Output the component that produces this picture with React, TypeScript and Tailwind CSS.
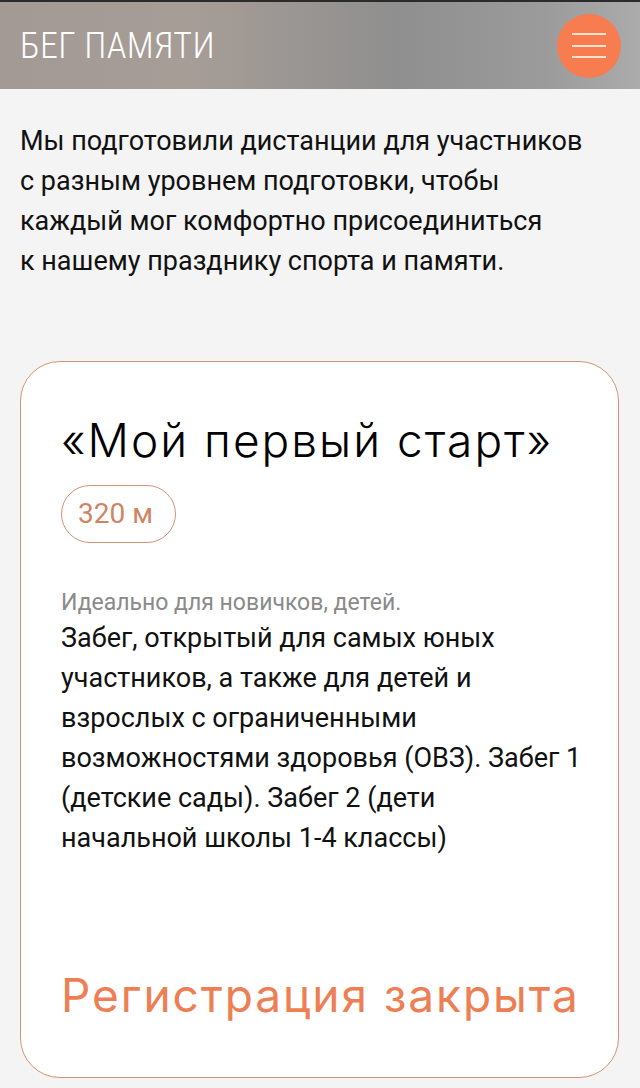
import { useState } from "react";

const body = "font-['Roboto','Liberation_Sans',sans-serif]";
const geo = "font-['Inter','Noto_Sans',sans-serif]";

function Header() {
  const [open, setOpen] = useState(false);
  return (
    <header className="border-t-2 border-[#2b2b2b] bg-[linear-gradient(90deg,#a39a95_0%,#a69d97_30%,#8f8f8f_62%,#9b9b9b_85%,#ababab_100%)]">
      <div className="flex h-[87px] items-center justify-between pl-5 pr-[19px]">
        <span className="font-['Liberation_Sans_Narrow','Roboto_Condensed','Roboto',sans-serif] text-[36px] font-light leading-none tracking-[0.3px] text-white">
          БЕГ ПАМЯТИ
        </span>
        <button
          onClick={() => setOpen(!open)}
          className="flex h-16 w-16 flex-col items-center justify-center gap-[9.5px] rounded-full bg-[#f77c50]"
        >
          <span className="h-[2px] w-[34px] bg-[#fbe3cf]" />
          <span className="h-[2px] w-[34px] bg-[#fbe3cf]" />
          <span className="h-[2px] w-[34px] bg-[#fbe3cf]" />
        </button>
      </div>
    </header>
  );
}

export default function App() {
  return (
    <div className="min-h-screen bg-[#f4f4f4]">
      <Header />
      <main className="px-5 pt-8">
        <p className={`${body} text-[27px] leading-[40px] text-[#111]`}>
          Мы подготовили дистанции для участников
          <br />с разным уровнем подготовки, чтобы
          <br />
          каждый мог комфортно присоединиться
          <br />к нашему празднику спорта и памяти.
        </p>

        <div className="mt-20 mr-px rounded-[40px] border-[1.5px] border-[#d4927a] bg-white pt-[52px] pr-[26px] pb-[52px] pl-10">
          <h2 className={`${geo} text-[46px] font-light leading-[53px] tracking-[2px] text-black`}>
            «Мой первый старт»
          </h2>
          <div className="mt-[18px] flex">
            <span className={`${body} flex h-[58px] items-center rounded-full border-[1.5px] border-[#d4927a] pl-4 pr-[22px] text-[28px] text-[#cf8466]`}>
              320 м
            </span>
          </div>
          <p className={`${body} mt-[45px] text-[23px] leading-[30px] text-[#8a8a8a]`}>
            Идеально для новичков, детей.
          </p>
          <p className={`${body} text-[27px] leading-[40px] text-[#111]`}>
            Забег, открытый для самых юных
            <br />
            участников, а также для детей и
            <br />
            взрослых с ограниченными
            <br />
            возможностями здоровья (ОВЗ). Забег 1
            <br />
            (детские сады). Забег 2 (дети
            <br />
            начальной школы 1-4 классы)
          </p>
          <div className={`${geo} mt-[107px] whitespace-nowrap text-[46px] leading-[60px] tracking-[1.9px] text-[#ee7f55]`}>
            Регистрация закрыта
          </div>
        </div>
      </main>
    </div>
  );
}
